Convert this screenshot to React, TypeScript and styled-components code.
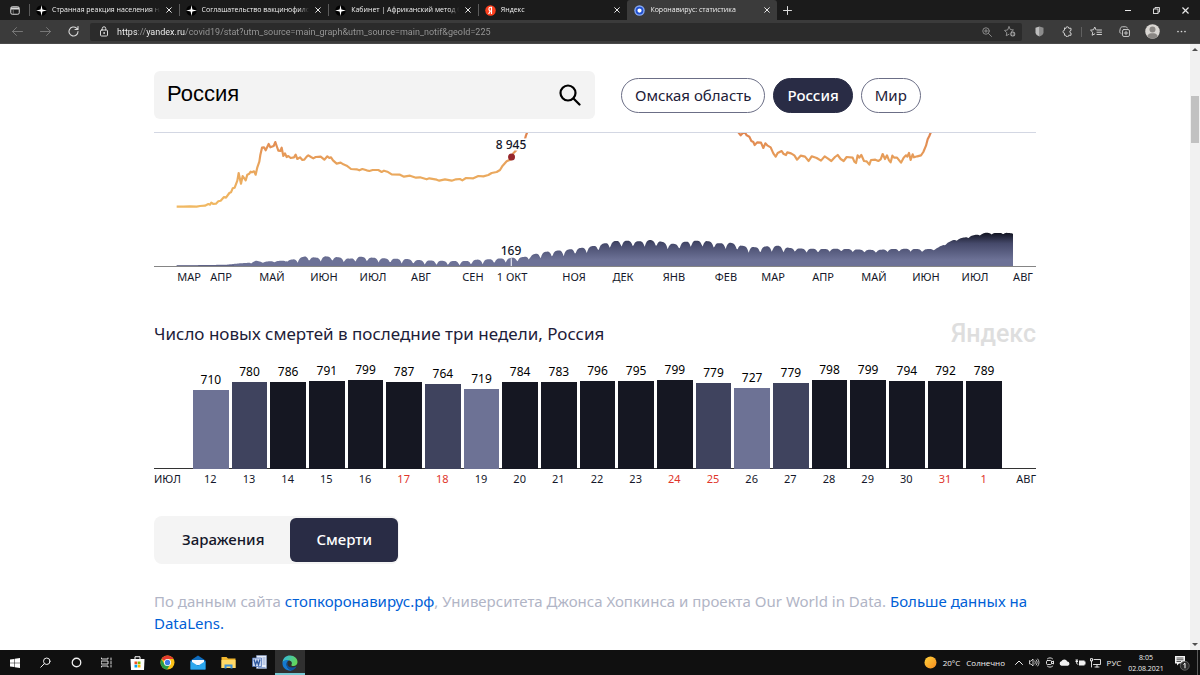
import React from "react";
import styled, { createGlobalStyle, css } from "styled-components";

const UI_FONT = `"Open Sans", "Noto Sans", sans-serif`;
const TEXT_FONT = `"Noto Sans", "Open Sans", sans-serif`;

const GlobalStyle = createGlobalStyle`
  *, *::before, *::after { box-sizing: border-box; }
  html, body { margin: 0; padding: 0; background: #fff; }
  body { font-family: ${TEXT_FONT}; color: #14172a; overflow: hidden; }
  button, input { font: inherit; color: inherit; margin: 0; padding: 0; border: 0; background: none; }
  button { cursor: pointer; }
  svg { display: block; }
`;

const Screen = styled.div`
  display: flex;
  flex-direction: column;
  height: 100vh;
`;

/* ---------- browser chrome ---------- */

const TitleBar = styled.div`
  display: flex;
  align-items: stretch;
  flex: 0 0 20px;
  background: #1b1b1b;
  color: #f0f0f0;
  font-family: ${UI_FONT};
`;

const TabActions = styled.button`
  display: flex;
  align-items: center;
  justify-content: center;
  width: 29px;
`;

const TabStrip = styled.div`
  display: flex;
  flex: 0 1 748px;
  min-width: 0;
`;

const Tab = styled.div<{ $active?: boolean }>`
  display: flex;
  align-items: center;
  flex: 1 1 0;
  min-width: 0;
  gap: 5px;
  padding: 0 6px 0 7px;
  position: relative;
  ${(p) =>
    p.$active
      ? css`
          background: #3b3b3b;
          border-radius: 3px 3px 0 0;
        `
      : css`
          &::before {
            content: "";
            position: absolute;
            left: 0;
            top: 4px;
            bottom: 4px;
            width: 1px;
            background: #5a5a5a;
          }
        `}
`;

const TabTitle = styled.span`
  flex: 1 1 0;
  overflow: hidden;
  white-space: nowrap;
  font-size: 7px;
  font-weight: 500;
  line-height: 12px;
  mask-image: linear-gradient(to right, #000 calc(100% - 10px), transparent);
`;

const GlyphButton = styled.button<{ $w?: number }>`
  display: flex;
  align-items: center;
  justify-content: center;
  flex: none;
  width: ${(p) => p.$w ?? 8}px;
`;

const WindowControls = styled.div`
  display: flex;
  margin-left: auto;
`;

const Toolbar = styled.div`
  display: flex;
  align-items: center;
  flex: 0 0 24px;
  background: #3b3b3b;
  border-bottom: 1px solid #4a4a4a;
  color: #d6d6d6;
  font-family: ${UI_FONT};
`;

const NavGroup = styled.div`
  display: flex;
  width: 90px;
  padding-left: 3px;
`;

const AddressBar = styled.form`
  display: flex;
  align-items: center;
  flex: 1;
  height: 18px;
  padding: 0 1px 0 6px;
  border-radius: 2px;
  background: #2b2b2b;
  color: #9a9a9a;
`;

const AddressInput = styled.input`
  flex: 1;
  min-width: 0;
  margin-left: 6px;
  font-family: Roboto, "Open Sans", sans-serif;
  font-size: 9px;
  line-height: 14px;
  outline: none;
  color: transparent;
  background-image: linear-gradient(
    to right,
    #ffffff 0 21px,
    #9a9a9a 21px 29px,
    #ffffff 29px 68px,
    #9a9a9a 68px
  );
  background-clip: text;
  -webkit-background-clip: text;
`;

const ExtensionGroup = styled.div`
  display: flex;
  align-items: center;
  padding: 0 4px 0 3px;
`;

const ToolbarDivider = styled.span`
  width: 1px;
  height: 10px;
  background: #606060;
`;

/* ---------- page ---------- */

const Viewport = styled.div`
  display: flex;
  flex: 1;
  min-height: 0;
  background: #fff;
`;

const PageArea = styled.main`
  flex: 1;
  min-width: 0;
  overflow: hidden;
`;

const Scrollbar = styled.div`
  display: flex;
  flex-direction: column;
  justify-content: space-between;
  align-items: center;
  flex: 0 0 10px;
  padding: 3px 0;
  background: #f1f1f1;
`;

const ScrollTrack = styled.div`
  flex: 1;
  width: 8px;
  padding-top: 45px;
`;

const ScrollThumb = styled.div`
  height: 47px;
  background: #c1c1c1;
`;

const Column = styled.div`
  max-width: 882px;
  margin: 0 auto;
`;

const Header = styled.header`
  display: flex;
  align-items: center;
  gap: 26px;
  padding: 27px 0 13px;
  border-bottom: 1px solid #d3d7e3;
`;

const SearchForm = styled.form`
  display: flex;
  align-items: center;
  flex: 0 1 441px;
  height: 48px;
  padding: 0 14px 0 13px;
  border-radius: 6px;
  background: #f3f3f3;
`;

const SearchInput = styled.input`
  flex: 1;
  min-width: 0;
  font-family: "Liberation Sans", Arial, sans-serif;
  font-size: 22px;
  line-height: 28px;
  padding-bottom: 2px;
  outline: none;
  color: #000;
`;

const Chips = styled.nav`
  display: flex;
  gap: 8px;
`;

const Chip = styled.button<{ $active?: boolean }>`
  height: 35px;
  padding: 0 13px;
  border: 1px solid ${(p) => (p.$active ? "#292c45" : "#6b6e86")};
  border-radius: 18px;
  background: ${(p) => (p.$active ? "#292c45" : "#fff")};
  color: ${(p) => (p.$active ? "#fff" : "#1d2038")};
  font-size: 15px;
  font-weight: ${(p) => (p.$active ? 500 : 400)};
  line-height: 20px;
  white-space: nowrap;
`;

const TrendChart = styled.svg`
  width: 100%;
  height: auto;
  font-family: ${TEXT_FONT};
`;

const SectionHead = styled.div`
  display: flex;
  align-items: center;
  justify-content: space-between;
  height: 36px;
  margin-top: 29px;
`;

const SectionTitle = styled.h2`
  margin: 0;
  font-size: 17px;
  font-weight: 400;
  line-height: 24px;
  color: #1d2038;
`;

const Brand = styled.span`
  font-family: Roboto, "Open Sans", sans-serif;
  font-size: 25px;
  font-weight: 500;
  line-height: 32px;
  color: #dedede;
`;

const DailyChart = styled.figure`
  margin: 8px 0 0;
`;

const dayGrid = css`
  display: grid;
  grid-template-columns: 37px repeat(21, 1fr) 33px;
`;

const Bars = styled.div`
  ${dayGrid}
  align-items: end;
  height: 109px;
  border-bottom: 1px solid #333;
`;

const Day = styled.div`
  grid-row: 1;
  display: flex;
  flex-direction: column;
  align-items: stretch;
  margin: 0 1px 0 2px;
  font-size: 12px;
  line-height: 20px;
  text-align: center;
  color: #000;
`;

const Bar = styled.div<{ $tone: string }>`
  background: ${(p) => p.$tone};
`;

const DayAxis = styled.div`
  ${dayGrid}
  font-size: 11px;
  line-height: 20px;
  text-align: center;
`;

const DayLabel = styled.span<{ $weekend?: boolean }>`
  color: ${(p) => (p.$weekend ? "#e0352b" : "#14172a")};
`;

const MonthLabel = styled.span<{ $end?: boolean }>`
  display: flex;
  justify-content: ${(p) => (p.$end ? "flex-end" : "flex-start")};
`;

const Switcher = styled.div`
  display: flex;
  width: fit-content;
  height: 48px;
  margin-top: 27px;
  padding: 2px 1px 2px 0;
  border-radius: 8px;
  background: #f4f4f4;
`;

const SwitchButton = styled.button<{ $active?: boolean }>`
  padding: 0 26px 2px;
  border-radius: 6px;
  font-size: 15px;
  font-weight: 500;
  line-height: 20px;
  background: ${(p) => (p.$active ? "#292c45" : "transparent")};
  color: ${(p) => (p.$active ? "#fff" : "#14172a")};
  &:first-child {
    padding-left: 28px;
  }
`;

const Sources = styled.p`
  margin: 26px 0 0;
  font-size: 15px;
  line-height: 22px;
  color: #b1b5c6;
`;

const SourceLink = styled.a`
  color: #0060d6;
  text-decoration: none;
`;

/* ---------- taskbar ---------- */

const Taskbar = styled.footer`
  display: flex;
  align-items: stretch;
  flex: 0 0 25px;
  background: #101010;
  color: #f0f0f0;
  font-family: ${UI_FONT};
`;

const AppButtons = styled.div`
  display: grid;
  grid-template-columns: repeat(10, 1fr);
  width: 305px;
`;

const AppButton = styled.button<{ $active?: boolean }>`
  display: flex;
  align-items: center;
  justify-content: center;
  border-bottom: 2px solid ${(p) => (p.$active ? "#76c7d2" : "transparent")};
  border-top: 2px solid ${(p) => (p.$active ? "#303030" : "transparent")};
  background: ${(p) => (p.$active ? "#303030" : "none")};
`;

const Tray = styled.div`
  display: flex;
  align-items: center;
  margin-left: auto;
  font-size: 8px;
  line-height: 12px;
`;

const Weather = styled.button`
  display: flex;
  align-items: center;
  gap: 6px;
  margin-right: 6px;
  white-space: nowrap;
`;

const Language = styled.button`
  width: 22px;
`;

const Clock = styled.time`
  display: flex;
  flex-direction: column;
  align-items: center;
  width: 42px;
  font-size: 7px;
  line-height: 11px;
`;

const Notifications = styled.button`
  display: flex;
  align-items: center;
  justify-content: center;
  width: 30px;
`;

const DesktopEdge = styled.span`
  align-self: stretch;
  width: 3px;
  border-left: 1px solid #5a5a5a;
`;

/* ---------- icons ---------- */

const CloseGlyph = ({ size = 6 }: { size?: number }) => (
  <svg width={size} height={size} viewBox="0 0 6 6" stroke="#e8e8e8" strokeWidth="1">
    <path d="M.4.4 5.6 5.6M5.6.4.4 5.6" />
  </svg>
);

const SparkIcon = () => (
  <svg width="11" height="11" viewBox="0 0 22 22">
    <circle cx="11" cy="11" r="10.5" fill="#000" />
    <path d="M11 0 12.8 9.2 22 11 12.8 12.8 11 22 9.2 12.8 0 11 9.2 9.2Z" fill="#fff" />
  </svg>
);

const YandexIcon = () => (
  <svg width="11" height="11" viewBox="0 0 22 22">
    <circle cx="11" cy="11" r="10.5" fill="#fc3f1d" />
    <path d="M13 18V4.5h-1.6c-2.4 0-3.6 1.3-3.6 3.3 0 2.2 1 3.3 2.7 4.4L7.2 18" fill="none" stroke="#fff" strokeWidth="2.3" />
  </svg>
);

const CovidIcon = () => (
  <svg width="11" height="11" viewBox="0 0 22 22">
    <circle cx="11" cy="11" r="10.5" fill="#86a8f2" />
    <circle cx="11" cy="11" r="6" fill="#fff" stroke="#1f4fd0" strokeWidth="3.5" />
    <circle cx="11" cy="11" r="2.2" fill="#fff" />
  </svg>
);

const Stroke = ({
  w,
  h = w,
  box = "0 0 24 24",
  sw = 2,
  color = "currentColor",
  children,
}: {
  w: number;
  h?: number;
  box?: string;
  sw?: number;
  color?: string;
  children: React.ReactNode;
}) => (
  <svg width={w} height={h} viewBox={box} fill="none" stroke={color} strokeWidth={sw} strokeLinecap="round" strokeLinejoin="round">
    {children}
  </svg>
);

/* ---------- data ---------- */

const tabs = [
  { title: "Странная реакция населения на", icon: <SparkIcon /> },
  { title: "Соглашательство вакцинофилов", icon: <SparkIcon /> },
  { title: "Кабинет | Африканский метод б", icon: <SparkIcon /> },
  { title: "Яндекс", icon: <YandexIcon /> },
  { title: "Коронавирус: статистика", icon: <CovidIcon />, active: true },
];

const days: { day: number; deaths: number; weekend?: boolean }[] = [
  { day: 12, deaths: 710 },
  { day: 13, deaths: 780 },
  { day: 14, deaths: 786 },
  { day: 15, deaths: 791 },
  { day: 16, deaths: 799 },
  { day: 17, deaths: 787, weekend: true },
  { day: 18, deaths: 764, weekend: true },
  { day: 19, deaths: 719 },
  { day: 20, deaths: 784 },
  { day: 21, deaths: 783 },
  { day: 22, deaths: 796 },
  { day: 23, deaths: 795 },
  { day: 24, deaths: 799, weekend: true },
  { day: 25, deaths: 779, weekend: true },
  { day: 26, deaths: 727 },
  { day: 27, deaths: 779 },
  { day: 28, deaths: 798 },
  { day: 29, deaths: 799 },
  { day: 30, deaths: 794 },
  { day: 31, deaths: 792, weekend: true },
  { day: 1, deaths: 789, weekend: true },
];

const toneFor = (deaths: number) => {
  if (deaths < 750) return "#6d7295";
  if (deaths <= 780) return "#3f435e";
  return "#151722";
};

const months: [string, number][] = [
  ["МАР", 35],
  ["АПР", 67],
  ["МАЙ", 118],
  ["ИЮН", 170],
  ["ИЮЛ", 219],
  ["АВГ", 267],
  ["СЕН", 319],
  ["1 ОКТ", 358],
  ["НОЯ", 420],
  ["ДЕК", 469],
  ["ЯНВ", 520],
  ["ФЕВ", 572],
  ["МАР", 619],
  ["АПР", 669],
  ["МАЙ", 720],
  ["ИЮН", 772],
  ["ИЮЛ", 821],
  ["АВГ", 869],
];

/* The curves are stored on a plot grid three times finer than the chart. */
const casesSpring =
  "68,221 88,221 108,220 128,221 138,219 153,218 163,213 168,215 172,209 178,213 186,212 193,205 200,203 210,192 216,194 226,180 231,178 236,166 242,164 250,143 254,120 258,139 261,152 266,129 275,142 280,125 286,122 290,116 294,118 300,115 305,125 310,103 316,86 319,66 324,44 330,43 335,52 344,33 349,43 359,39 364,27 368,39 373,53 379,54 383,44 388,69 393,61 398,72 403,69 410,75 420,73 425,65 430,78 438,73 445,81 451,80 458,71 463,67 471,72 478,76 485,72 500,71 511,80 520,70 526,75 531,73 537,82 548,92 560,89 568,94 578,98 591,108 608,109 616,112 625,108 638,112 646,114 656,111 673,111 683,117 690,113 700,116 713,124 738,125 750,131 768,128 786,134 798,133 818,139 826,136 848,140 856,143 873,139 893,143 906,139 918,138 925,142 936,135 958,136 973,129 988,130 1003,126 1013,120 1028,117 1038,111 1046,98 1058,85 1071,79 1078,61 1084,55 1093,43 1103,28 1112,21 1116,7 1122,-8";
const casesWinter =
  "1750,-6 1760,7 1766,1 1772,-3 1778,7 1786,11 1792,24 1798,27 1802,36 1810,28 1821,29 1828,45 1834,31 1841,38 1850,43 1858,61 1865,71 1871,60 1883,54 1888,62 1896,66 1900,58 1911,61 1921,67 1929,80 1940,68 1953,71 1964,84 1973,70 1988,75 2001,83 2012,70 2021,76 2032,84 2043,72 2051,66 2060,78 2069,84 2078,72 2096,74 2101,86 2106,90 2111,67 2116,74 2122,66 2130,84 2138,85 2146,95 2151,81 2164,80 2173,84 2180,79 2186,63 2193,78 2199,67 2205,82 2210,88 2215,68 2221,74 2229,74 2241,89 2249,74 2256,67 2260,71 2265,60 2270,81 2276,64 2280,73 2290,70 2301,67 2308,57 2316,38 2321,19 2326,9 2333,-8";

const deathsEnvelope: [number, number][] = [
  [68, 398], [168, 397], [218, 396], [258, 392], [288, 390], [306, 384], [323, 387], [388, 384], [418, 380],
  [453, 371], [488, 375], [513, 371], [548, 373], [588, 378], [616, 372], [658, 375], [688, 377], [758, 379],
  [788, 382], [848, 384], [888, 385], [938, 385], [963, 381], [1003, 380], [1028, 378], [1068, 376], [1108, 373],
  [1138, 365], [1168, 358], [1208, 354], [1238, 351], [1278, 346], [1318, 340], [1348, 333], [1383, 325],
  [1418, 324], [1458, 326], [1488, 322], [1518, 326], [1548, 333], [1570, 334], [1588, 328], [1618, 324],
  [1658, 325], [1698, 332], [1728, 330], [1768, 340], [1808, 344], [1838, 341], [1873, 339], [1908, 346],
  [1948, 348], [2008, 349], [2048, 348], [2088, 349], [2128, 351], [2168, 352], [2208, 349], [2268, 348],
  [2308, 350], [2345, 348], [2378, 331], [2398, 322], [2428, 315], [2458, 308], [2498, 300], [2523, 301],
  [2553, 300], [2577, 302],
];

const FLOOR = 402;
const WEEK = 34.7;

const envelopeAt = (x: number) => {
  for (let i = 1; i < deathsEnvelope.length; i++) {
    const [x0, y0] = deathsEnvelope[i - 1];
    const [x1, y1] = deathsEnvelope[i];
    if (x <= x1) return y0 + ((y1 - y0) * (x - x0)) / (x1 - x0);
  }
  return deathsEnvelope[deathsEnvelope.length - 1][1];
};

const dipDepth = (x: number) => {
  if (x < 290) return 0;
  if (x < 400) return 4;
  if (x < 1130) return 14;
  if (x < 1900) return 19;
  if (x < 2000) return 12;
  if (x < 2330) return 9;
  return 5;
};

/* Reporting drops every weekend, so each week ends with a short notch. */
const deathsPath = (() => {
  const points: string[] = [];
  for (let x = 68; x <= 2577; x += 3) {
    const phase = (((x - 1333) % WEEK) + WEEK) % WEEK;
    const distance = Math.min(phase, WEEK - phase) / (WEEK / 2);
    const notch = Math.pow(1 - distance, 3.4) * dipDepth(x);
    points.push(`${x},${Math.min(399, envelopeAt(x) - 1 + notch).toFixed(1)}`);
  }
  return `M68,${FLOOR} L${points.join(" ")} L2577,302 L2577,${FLOOR} Z`;
})();

const Trend = () => (
  <TrendChart viewBox="0 0 882 154" role="img" aria-label="Заражения и смерти по месяцам">
    <defs>
      <linearGradient id="cases" gradientUnits="userSpaceOnUse" x1="0" y1="0" x2="0" y2="230">
        <stop offset="0" stopColor="#e0844f" />
        <stop offset="0.4" stopColor="#e8a35c" />
        <stop offset="1" stopColor="#f1ba63" />
      </linearGradient>
      <linearGradient id="deaths" gradientUnits="userSpaceOnUse" x1="0" y1="298" x2="0" y2={FLOOR}>
        <stop offset="0" stopColor="#10121f" />
        <stop offset="0.32" stopColor="#45496a" />
        <stop offset="0.8" stopColor="#6d7297" />
        <stop offset="1" stopColor="#6d7297" />
      </linearGradient>
    </defs>
    <svg width="882" height="134" viewBox="0 0 2646 402">
      <path d={deathsPath} fill="url(#deaths)" />
      <path d="M68 400H240" stroke="#34375a" strokeWidth="4" />
      <g fill="none" stroke="url(#cases)" strokeWidth="6.5" strokeLinejoin="round">
        <polyline points={casesSpring} />
        <polyline points={casesWinter} />
      </g>
      <path d="M1072 376V402" stroke="#d9dbe8" strokeWidth="4" />
    </svg>
    <rect y="133" width="882" height="1" fill="#858585" />
    <circle cx="357.5" cy="24" r="3.5" fill="#96262c" />
    <g fontSize="12" fontWeight="500" textAnchor="middle" fill="#14172a" stroke="#fff" strokeWidth="3" paintOrder="stroke">
      <text x="357" y="16">8 945</text>
      <text x="357" y="122">169</text>
    </g>
    <g fontSize="11" textAnchor="middle" fill="#14172a">
      {months.map(([name, x]) => (
        <text key={x} x={x} y="148">
          {name}
        </text>
      ))}
    </g>
  </TrendChart>
);

export default function App() {
  return (
    <Screen>
      <GlobalStyle />
      <TitleBar>
        <TabActions aria-label="Меню вкладок">
          <svg width="10" height="9" viewBox="0 0 20 18">
            <rect x="1.5" y="1.5" width="17" height="15" rx="3" fill="none" stroke="#d8d8d8" strokeWidth="2" />
            <path d="M2 3h16v4H2z" fill="#d8d8d8" />
            <path d="M6.5 7v9" stroke="#888" strokeWidth="1.5" />
          </svg>
        </TabActions>
        <TabStrip>
          {tabs.map((tab) => (
            <Tab key={tab.title} $active={tab.active}>
              {tab.icon}
              <TabTitle>{tab.title}</TabTitle>
              <GlyphButton aria-label="Закрыть вкладку">
                <CloseGlyph />
              </GlyphButton>
            </Tab>
          ))}
        </TabStrip>
        <GlyphButton $w={21} aria-label="Новая вкладка">
          <Stroke w={9} box="0 0 9 9" sw={1} color="#dcdcdc">
            <path d="M4.5.5v8M.5 4.5h8" />
          </Stroke>
        </GlyphButton>
        <WindowControls>
          <GlyphButton $w={29} aria-label="Свернуть">
            <svg width="6" height="6" viewBox="0 0 6 6">
              <path d="M0 3.5h6" stroke="#e8e8e8" />
            </svg>
          </GlyphButton>
          <GlyphButton $w={29} aria-label="Восстановить">
            <svg width="7" height="7" viewBox="0 0 14 14" fill="none" stroke="#e8e8e8" strokeWidth="1.8">
              <rect x="1" y="4" width="9" height="9" />
              <path d="M4 4V1h9v9h-3" />
            </svg>
          </GlyphButton>
          <GlyphButton $w={29} aria-label="Закрыть">
            <CloseGlyph size={7} />
          </GlyphButton>
        </WindowControls>
      </TitleBar>

      <Toolbar>
        <NavGroup>
          <GlyphButton $w={28} aria-label="Назад">
            <Stroke w={11} box="0 0 22 22" sw={1.8} color="#7d7d7d">
              <path d="M21 11H1M9 3l-8 8 8 8" />
            </Stroke>
          </GlyphButton>
          <GlyphButton $w={28} aria-label="Вперёд">
            <Stroke w={11} box="0 0 22 22" sw={1.8} color="#7d7d7d">
              <path d="M1 11h20M13 3l8 8-8 8" />
            </Stroke>
          </GlyphButton>
          <GlyphButton $w={28} aria-label="Обновить">
            <Stroke w={11} box="0 0 22 22" sw={2.2} color="#d8d8d8">
              <path d="M20 11a9 9 0 1 1-3-6.7L19.5 6.5M20 1v6h-6" />
            </Stroke>
          </GlyphButton>
        </NavGroup>
        <AddressBar onSubmit={(e) => e.preventDefault()}>
          <GlyphButton $w={15} type="button" aria-label="Сведения о сайте">
            <Stroke w={10} h={11} box="0 0 20 22" sw={2} color="#d8d8d8">
              <rect x="3" y="8" width="14" height="12" rx="2" />
              <path d="M6.5 8V5a3.5 3.5 0 0 1 7 0v3" />
              <circle cx="10" cy="14" r="1" />
            </Stroke>
          </GlyphButton>
          <AddressInput
            aria-label="Адрес"
            spellCheck={false}
            defaultValue="https://yandex.ru/covid19/stat?utm_source=main_graph&utm_source=main_notif&geoId=225"
          />
          <GlyphButton $w={23} type="button" aria-label="Масштаб">
            <Stroke w={10} box="0 0 20 20" sw={1.7} color="#9a9a9a">
              <circle cx="8" cy="8" r="6.5" />
              <path d="m13 13 6 6M5 8h6M8 5v6" />
            </Stroke>
          </GlyphButton>
          <GlyphButton $w={23} type="button" aria-label="В избранное">
            <Stroke w={12} h={11} box="0 0 24 22" sw={1.8} color="#9a9a9a">
              <path d="m10 1.5 2.7 5.6 6.2.8-4.5 4.2M10 16.5l-5.500 3 1.100-6.100L1 8.900l6.200-.9L10 1.500" />
              <circle cx="17.5" cy="16" r="5" fill="#a8a8a8" stroke="none" />
              <path d="M17.5 13.5v5M15 16h5" stroke="#2b2b2b" />
            </Stroke>
          </GlyphButton>
        </AddressBar>
        <ExtensionGroup>
          <GlyphButton $w={28} aria-label="Защита">
            <svg width="9" height="11" viewBox="0 0 18 22">
              <path d="M9 1 17 3.5V13c0 4-4 6.5-8 8Z" fill="#8c8c8c" />
              <path d="M9 1 1 3.5V13c0 4 4 6.5 8 8Z" fill="#bdbdbd" />
            </svg>
          </GlyphButton>
          <GlyphButton $w={28} aria-label="Расширения">
            <Stroke w={11} box="0 0 22 22" sw={2} color="#d0d0d0">
              <path d="M7.500 4.500a3 3 0 0 1 6 0H18V9a2.500 2.500 0 0 0 0 5v4.500h-4.500a3 3 0 0 1-6 0H5V14.500a3 3 0 0 1 0-6v-4Z" />
            </Stroke>
          </GlyphButton>
          <ToolbarDivider />
          <GlyphButton $w={28} aria-label="Избранное">
            <Stroke w={12} h={11} box="0 0 24 22" sw={2} color="#d0d0d0">
              <path d="M12 7.5 9.5 2 7 7.5l-6 .8 4.4 4.2L4.3 18.5l5.2-2.8" />
              <path d="M14 8h9M14 12.5h9M14 17h9" />
            </Stroke>
          </GlyphButton>
          <GlyphButton $w={28} aria-label="Коллекции">
            <Stroke w={11} box="0 0 22 22" sw={1.8} color="#d0d0d0">
              <rect x="7" y="7" width="14" height="14" rx="3" />
              <path d="M14 10.5v7M10.5 14h7M4 15c-2-1-3-2.500-2.500-4.500l1-5C3 3 4.500 1.500 7 1.500h6c2 0 3 1 3.500 2.500" />
            </Stroke>
          </GlyphButton>
          <GlyphButton $w={29} aria-label="Профиль">
            <svg width="15" height="15" viewBox="0 0 30 30">
              <circle cx="15" cy="15" r="14.5" fill="#d9d6d2" />
              <circle cx="15" cy="11" r="6" fill="#8a8784" />
              <path d="M4.5 24.5C6 19.5 10 18.5 15 18.5s9 1 10.5 6C20 31 10 31 4.500 24.500Z" fill="#8a8784" />
            </svg>
          </GlyphButton>
          <GlyphButton $w={29} aria-label="Параметры">
            <svg width="9" height="3" viewBox="0 0 18 4" fill="#d8d8d8">
              <circle cx="2" cy="2" r="1.7" />
              <circle cx="9" cy="2" r="1.7" />
              <circle cx="16" cy="2" r="1.7" />
            </svg>
          </GlyphButton>
        </ExtensionGroup>
      </Toolbar>

      <Viewport>
        <PageArea>
          <Column>
            <Header>
              <SearchForm onSubmit={(e) => e.preventDefault()}>
                <SearchInput aria-label="Страна или регион" defaultValue="Россия" />
                <GlyphButton $w={22} aria-label="Найти">
                  <Stroke w={22} box="0 0 22 22" sw={2.2} color="#000">
                    <circle cx="9" cy="9" r="7.5" />
                    <path d="m14.5 14.5 6 6" />
                  </Stroke>
                </GlyphButton>
              </SearchForm>
              <Chips aria-label="Регион">
                <Chip>Омская область</Chip>
                <Chip $active>Россия</Chip>
                <Chip>Мир</Chip>
              </Chips>
            </Header>

            <Trend />

            <SectionHead>
              <SectionTitle>Число новых смертей в последние три недели, Россия</SectionTitle>
              <Brand>Яндекс</Brand>
            </SectionHead>

            <DailyChart>
              <Bars>
                {days.map((d, i) => (
                  <Day key={d.day} style={{ gridColumn: i + 2 }}>
                    {d.deaths}
                    <Bar $tone={toneFor(d.deaths)} style={{ height: Math.round(d.deaths * 0.111) }} />
                  </Day>
                ))}
              </Bars>
              <DayAxis>
                <MonthLabel>ИЮЛ</MonthLabel>
                {days.map((d) => (
                  <DayLabel key={d.day} $weekend={d.weekend}>
                    {d.day}
                  </DayLabel>
                ))}
                <MonthLabel $end>АВГ</MonthLabel>
              </DayAxis>
            </DailyChart>

            <Switcher>
              <SwitchButton>Заражения</SwitchButton>
              <SwitchButton $active>Смерти</SwitchButton>
            </Switcher>

            <Sources>
              По данным сайта <SourceLink href="#stop">стопкоронавирус.рф</SourceLink>, Университета Джонса Хопкинса и
              проекта Our World in Data. <SourceLink href="#datalens">Больше данных на DataLens.</SourceLink>
            </Sources>
          </Column>
        </PageArea>
        <Scrollbar aria-hidden="true">
          <svg width="6" height="4" viewBox="0 0 6 4">
            <path d="M0 4 3 1l3 3Z" fill="#505050" />
          </svg>
          <ScrollTrack>
            <ScrollThumb />
          </ScrollTrack>
          <svg width="6" height="4" viewBox="0 0 6 4">
            <path d="M0 0 3 3l3-3Z" fill="#505050" />
          </svg>
        </Scrollbar>
      </Viewport>

      <Taskbar>
        <AppButtons>
          <AppButton aria-label="Пуск">
            <svg width="10" height="10" viewBox="0 0 20 20" fill="#fff">
              <path d="M0 3 8.5 1.8V9.5H0ZM9.5 1.6 20 0v9.5H9.5ZM0 10.5h8.5v7.7L0 17ZM9.5 10.5H20V20L9.5 18.4Z" />
            </svg>
          </AppButton>
          <AppButton aria-label="Поиск">
            <Stroke w={11} box="0 0 22 22" sw={2}>
              <circle cx="13.5" cy="8.5" r="6.5" />
              <path d="m8.5 13.5-7 7" />
            </Stroke>
          </AppButton>
          <AppButton aria-label="Кортана">
            <Stroke w={11} box="0 0 22 22" sw={2.6}>
              <circle cx="11" cy="11" r="8.5" />
            </Stroke>
          </AppButton>
          <AppButton aria-label="Представление задач">
            <Stroke w={11} box="0 0 22 22" sw={1.8}>
              <path d="M1 2v2h13V2M1 20v-2h13v2M1 8h13v6H1zM20 2v4M20 9v5M20 17v3" />
            </Stroke>
          </AppButton>
          <AppButton aria-label="Магазин">
            <svg width="15" height="16" viewBox="0 0 30 32">
              <path d="M10 9V3.5h10V9" fill="none" stroke="#fff" strokeWidth="2" />
              <path d="M1 8h28l-1 22H2Z" fill="#fff" />
              <path d="M9 13h5.5v5.5H9z" fill="#f25022" />
              <path d="M15.5 13H21v5.5h-5.500z" fill="#7fba00" />
              <path d="M9 19.5h5.5V25H9z" fill="#00a4ef" />
              <path d="M15.5 19.5H21V25h-5.500z" fill="#ffb900" />
            </svg>
          </AppButton>
          <AppButton aria-label="Chrome">
            <svg width="15" height="15" viewBox="0 0 30 30">
              <circle cx="15" cy="15" r="14" fill="#fbc116" />
              <path d="M15 15 2.9 8A14 14 0 0 1 27.1 8H15Z" fill="#e33b2e" />
              <path d="M2.9 8A14 14 0 0 0 14 29l6.5-10.5L9 18.5Z" fill="#2a9d48" />
              <circle cx="15" cy="15" r="7" fill="#fff" />
              <circle cx="15" cy="15" r="5.3" fill="#3f7fe8" />
            </svg>
          </AppButton>
          <AppButton aria-label="Почта">
            <svg width="16" height="15" viewBox="0 0 32 30">
              <path d="M1 11 16 1l15 10v18H1Z" fill="#0f6cbd" />
              <path d="M4 10h24v10H4Z" fill="#f4f9ff" />
              <path d="m1 12 15 9.5L31 12v17H1Z" fill="#2ba7ef" />
            </svg>
          </AppButton>
          <AppButton aria-label="Проводник">
            <svg width="15" height="13" viewBox="0 0 30 26">
              <path d="M1 2h10l3 3h15v19H1Z" fill="#f2b72e" />
              <path d="M1 8h28v16H1Z" fill="#ffd968" />
              <path d="M7 25v-8h16v8h-4v-4h-8v4Z" fill="#3c8fd6" />
            </svg>
          </AppButton>
          <AppButton aria-label="Word">
            <svg width="15" height="15" viewBox="0 0 30 30">
              <path d="M9 1h20v26H9Z" fill="#e8eef9" stroke="#8fa8d4" />
              <path d="M21 6h6M21 10h6M21 14h6M21 18h6M12 25h15" stroke="#6d8cc6" strokeWidth="1.5" />
              <path d="M1 6h18v17H1Z" fill="#c9d6ee" stroke="#4c72b8" strokeWidth="1.5" />
              <path d="m4 9 3 10.500 3-8 3 8 3-10.500" fill="none" stroke="#2b569d" strokeWidth="2.6" />
            </svg>
          </AppButton>
          <AppButton $active aria-label="Edge">
            <svg width="16" height="16" viewBox="0 0 32 32">
              <defs>
                <linearGradient id="edgeTop" x1="0" y1="0" x2="1" y2="0.4">
                  <stop offset="0" stopColor="#2fb5ea" />
                  <stop offset="1" stopColor="#62d65a" />
                </linearGradient>
              </defs>
              <path d="M1 15C2 6 8 1 16 1c9 0 15 6 15 13 0 5-4 8-8 8-3 0-5-1-4-3 2-3 0-8-6-8-5 0-9 1-12 4Z" fill="url(#edgeTop)" />
              <path d="M1 15c3-5 9-6 13-4-3 1-5 4-5 8 0 6 5 10 11 12C9 33 0 25 1 15Z" fill="#1479d0" />
              <path d="M12 14c-4 8 4 14 17 9-2 4-6 7-9 8-6-1-11-6-11-12 0-2 1-4 3-5Z" fill="#0d529f" />
            </svg>
          </AppButton>
        </AppButtons>

        <Tray>
          <Weather>
            <svg width="13" height="13" viewBox="0 0 26 26">
              <defs>
                <linearGradient id="sun" x1="0" y1="0" x2="1" y2="1">
                  <stop offset="0" stopColor="#ffd23c" />
                  <stop offset="1" stopColor="#f68b1e" />
                </linearGradient>
              </defs>
              <circle cx="13" cy="13" r="12" fill="url(#sun)" />
            </svg>
            <span>20°C</span>
            <span>Солнечно</span>
          </Weather>
          <GlyphButton $w={15} aria-label="Скрытые значки">
            <Stroke w={8} h={5} box="0 0 16 10" sw={2}>
              <path d="m1 9 7-7 7 7" />
            </Stroke>
          </GlyphButton>
          <GlyphButton $w={16} aria-label="Громкость">
            <Stroke w={11} h={9} box="0 0 22 18" sw={1.6}>
              <path d="M1 6v6h3l4 4V2L4 6ZM11.5 6c1.5 2 1.5 4 0 6M14.5 4c2.5 3 2.5 7 0 10M17.5 2c3.5 4.5 3.5 9.5 0 14" />
            </Stroke>
          </GlyphButton>
          <GlyphButton $w={15} aria-label="Начать собрание">
            <Stroke w={8} h={11} box="0 0 16 22" sw={1.8}>
              <path d="M3 3.500C6 1 10 1 13 3.500M3 18.500c3 2.500 7 2.500 10 0" />
              <rect x="1" y="7" width="10" height="8" rx="2" />
              <path d="m11 10 4-2v6l-4-2" />
            </Stroke>
          </GlyphButton>
          <GlyphButton $w={15} aria-label="OneDrive">
            <svg width="11" height="7" viewBox="0 0 22 14">
              <path d="M5 13.500a4.500 4.500 0 0 1-.3-8.800A6.500 6.500 0 0 1 16.500 5a4.300 4.300 0 0 1 1 8.500Z" fill="#f0f0f0" />
            </svg>
          </GlyphButton>
          <GlyphButton $w={16} aria-label="Батарея">
            <svg width="11" height="8" viewBox="0 0 22 16">
              <path d="M1 2h5M1 5h5M3.500 2v6c0 2 1 2.500 3 2.500" fill="none" stroke="#f0f0f0" strokeWidth="2" />
              <path d="M8 3h11v2h2v6h-2v2H8Z" fill="#f0f0f0" />
            </svg>
          </GlyphButton>
          <GlyphButton $w={15} aria-label="Сеть">
            <Stroke w={11} h={10} box="0 0 22 20" sw={1.8}>
              <path d="M8 3h13v10H7M14 13v5M10 18h8M1 2v4h4V2ZM3 6v12" />
            </Stroke>
          </GlyphButton>
          <Language>РУС</Language>
          <Clock>
            <span>8:05</span>
            <span>02.08.2021</span>
          </Clock>
          <Notifications aria-label="Уведомления">
            <svg width="16" height="16" viewBox="0 0 32 32">
              <path d="M2 2h20v15H10l-4 4v-4H2Z" fill="#f4f4f4" />
              <path d="M5 6h14M5 9.5h14M5 13h9" stroke="#101010" strokeWidth="1.4" />
              <circle cx="21.5" cy="21.5" r="9" fill="#2c2c2c" stroke="#8a8a8a" strokeWidth="1.2" />
              <path d="m19 19 3-2.500v10" fill="none" stroke="#fff" strokeWidth="2" />
            </svg>
          </Notifications>
          <DesktopEdge />
        </Tray>
      </Taskbar>
    </Screen>
  );
}
